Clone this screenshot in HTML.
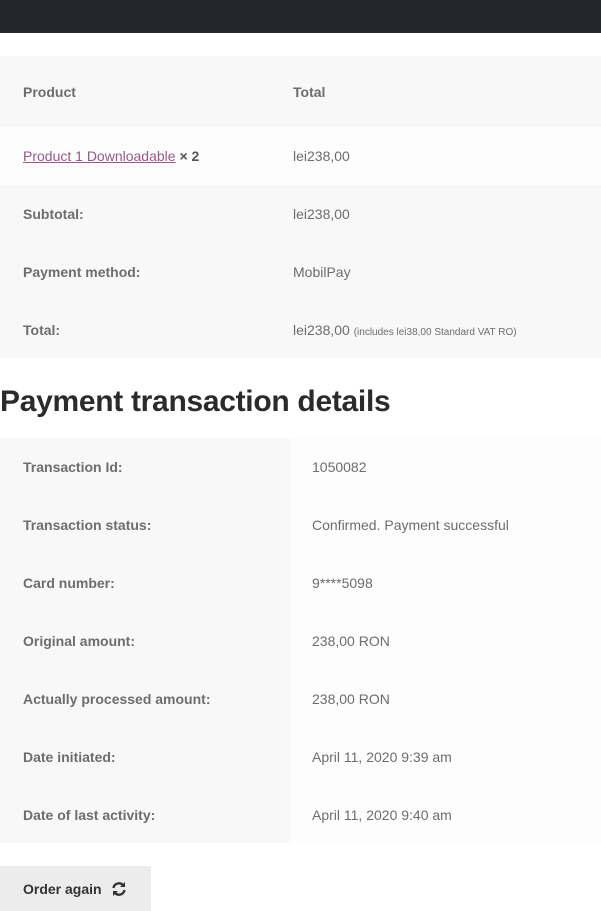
<!DOCTYPE html>
<html><head><style>
*{margin:0;padding:0;box-sizing:border-box}
body{width:601px;height:911px;background:#fff;font-family:"Liberation Sans",sans-serif;font-size:14px;color:#6d6d6d;position:relative;overflow:hidden}
.bar{position:absolute;left:0;top:0;width:601px;height:33px;background:#23272b}
.row{position:absolute;left:0;width:601px;display:flex;align-items:center}
.c1{position:absolute;left:23px;font-weight:bold;font-size:14px}
.c2{position:absolute;left:293px;font-size:14px}
.d1{position:absolute;left:0;top:0;width:290px;height:100%;background:#f8f8f8}
.d2{position:absolute;left:290px;top:0;width:311px;height:100%;background:#fdfdfd}
.t2 .c1{left:23px}
.t2 .c2{left:312px}
a{color:#96588a;text-decoration:underline}
h2{position:absolute;left:0;top:385px;font-size:30px;font-weight:bold;color:#2b2b2b;letter-spacing:-0.3px}
.btn{position:absolute;left:0;top:866px;width:151px;height:45px;background:#ececec;color:#333;font-weight:bold;font-size:14px;display:flex;align-items:center;padding-left:23px}
</style></head><body>
<div class="bar"></div>
<div class="row" style="top:56px;height:71px;background:#f8f8f8"><span class="c1">Product</span><span class="c2" style="font-weight:bold">Total</span></div>
<div class="row" style="top:127px;height:58px;background:#fdfdfd"><span class="c1" style="font-weight:normal"><a>Product 1 Downloadable</a> <b style="color:#555">× 2</b></span><span class="c2">lei238,00</span></div>
<div class="row" style="top:185px;height:58px;background:#f8f8f8"><span class="c1">Subtotal:</span><span class="c2">lei238,00</span></div>
<div class="row" style="top:243px;height:58px;background:#f8f8f8"><span class="c1">Payment method:</span><span class="c2">MobilPay</span></div>
<div class="row" style="top:301px;height:57px;background:#f8f8f8"><span class="c1">Total:</span><span class="c2">lei238,00 <small style="font-size:10px">(includes lei38,00 Standard VAT RO)</small></span></div>
<h2>Payment transaction details</h2>
<div class="t2">
<div class="row" style="top:438px;height:58px"><div class="d1"></div><div class="d2"></div><span class="c1">Transaction Id:</span><span class="c2">1050082</span></div>
<div class="row" style="top:496px;height:58px"><div class="d1"></div><div class="d2"></div><span class="c1">Transaction status:</span><span class="c2">Confirmed. Payment successful</span></div>
<div class="row" style="top:554px;height:58px"><div class="d1"></div><div class="d2"></div><span class="c1">Card number:</span><span class="c2">9****5098</span></div>
<div class="row" style="top:612px;height:58px"><div class="d1"></div><div class="d2"></div><span class="c1">Original amount:</span><span class="c2">238,00 RON</span></div>
<div class="row" style="top:670px;height:58px"><div class="d1"></div><div class="d2"></div><span class="c1">Actually processed amount:</span><span class="c2">238,00 RON</span></div>
<div class="row" style="top:728px;height:58px"><div class="d1"></div><div class="d2"></div><span class="c1">Date initiated:</span><span class="c2">April 11, 2020 9:39 am</span></div>
<div class="row" style="top:786px;height:57px"><div class="d1"></div><div class="d2"></div><span class="c1">Date of last activity:</span><span class="c2">April 11, 2020 9:40 am</span></div>
</div>
<div class="btn">Order again
<svg style="margin-left:9px" width="16" height="16" viewBox="0 0 16 16" fill="none" stroke="#333" stroke-width="2.4"><path d="M2.5 7a5.5 5.5 0 0 1 9.8-2.5"/><path d="M13.5 9a5.5 5.5 0 0 1-9.8 2.5"/><path d="M14 1v5h-5z" fill="#333" stroke="none"/><path d="M2 15v-5h5z" fill="#333" stroke="none"/></svg></div>
</body></html>
